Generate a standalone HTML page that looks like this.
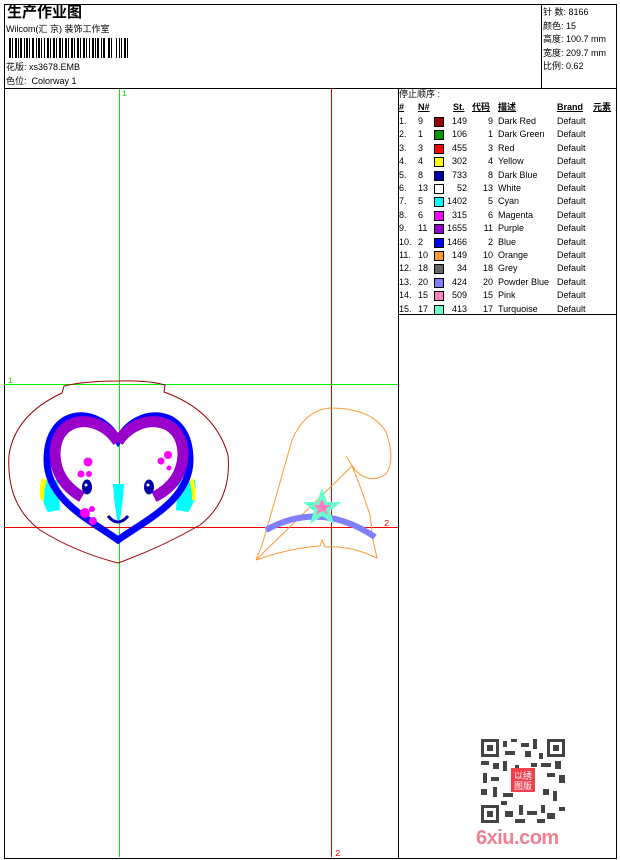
<!DOCTYPE html>
<html><head><meta charset="utf-8"><style>
*{margin:0;padding:0;box-sizing:border-box}
body{width:620px;height:860px;background:#fff;position:relative;overflow:hidden;font-family:"Liberation Sans","Noto Sans CJK SC",sans-serif;color:#000}
.a{position:absolute;white-space:nowrap}
.t{font-size:9px;line-height:11px}
</style></head><body>
<div class="a" style="left:4px;top:4px;width:613px;height:855px;border:1px solid #000"></div>
<div class="a" style="left:4px;top:88px;width:613px;height:1px;background:#000"></div>
<div class="a" style="left:541px;top:4px;width:1px;height:84px;background:#000"></div>
<div class="a" style="left:398px;top:88px;width:1px;height:771px;background:#000"></div>
<div class="a" style="left:398px;top:314px;width:219px;height:1px;background:#000"></div>

<div class="a" style="left:7px;top:4px;font-size:15px;font-weight:bold;line-height:18px">生产作业图</div>
<div class="a t" style="left:6px;top:24px">Wilcom(汇 京) 装饰工作室</div>
<svg class="a" style="left:9px;top:38px" width="120" height="20">
<g fill="#000">
<rect x="0" y="0" width="2" height="20"/><rect x="3" y="0" width="1" height="20"/><rect x="6" y="0" width="2" height="20"/><rect x="9" y="0" width="1" height="20"/><rect x="11" y="0" width="2" height="20"/><rect x="15" y="0" width="1" height="20"/><rect x="17" y="0" width="2" height="20"/><rect x="20" y="0" width="1" height="20"/><rect x="23" y="0" width="2" height="20"/><rect x="27" y="0" width="1" height="20"/><rect x="29" y="0" width="2" height="20"/><rect x="32" y="0" width="1" height="20"/><rect x="35" y="0" width="1" height="20"/><rect x="38" y="0" width="2" height="20"/><rect x="41" y="0" width="1" height="20"/><rect x="44" y="0" width="2" height="20"/><rect x="47" y="0" width="1" height="20"/><rect x="50" y="0" width="2" height="20"/><rect x="53" y="0" width="1" height="20"/><rect x="56" y="0" width="2" height="20"/><rect x="59" y="0" width="1" height="20"/><rect x="62" y="0" width="2" height="20"/><rect x="65" y="0" width="1" height="20"/><rect x="68" y="0" width="2" height="20"/><rect x="71" y="0" width="1" height="20"/><rect x="74" y="0" width="2" height="20"/><rect x="77" y="0" width="1" height="20"/><rect x="80" y="0" width="1" height="20"/><rect x="83" y="0" width="2" height="20"/><rect x="86" y="0" width="1" height="20"/><rect x="88" y="0" width="2" height="20"/><rect x="92" y="0" width="1" height="20"/><rect x="94" y="0" width="2" height="20"/><rect x="99" y="0" width="2" height="20"/><rect x="102" y="0" width="1" height="20"/><rect x="107" y="0" width="1" height="20"/><rect x="110" y="0" width="1" height="20"/><rect x="112" y="0" width="1" height="20"/><rect x="115" y="0" width="2" height="20"/><rect x="118" y="0" width="1" height="20"/>
</g></svg>
<div class="a t" style="left:6px;top:62px">花版: xs3678.EMB</div>
<div class="a t" style="left:6px;top:76px">色位:&nbsp; Colorway 1</div>

<div class="a t" style="left:543px;top:6px;line-height:13.5px">针 数: 8166<br>颜色: 15<br>高度: 100.7 mm<br>宽度: 209.7 mm<br>比例: 0.62</div>

<div class="a t" style="left:399px;top:89px">停止顺序 :</div>
<div class="a t" style="left:399px;top:102px;font-weight:bold;text-decoration:underline">#</div>
<div class="a t" style="left:418px;top:102px;font-weight:bold;text-decoration:underline">N#</div>
<div class="a t" style="left:453px;top:102px;font-weight:bold;text-decoration:underline">St.</div>
<div class="a t" style="left:472px;top:102px;font-weight:bold;text-decoration:underline">代码</div>
<div class="a t" style="left:498px;top:102px;font-weight:bold;text-decoration:underline">描述</div>
<div class="a t" style="left:557px;top:102px;font-weight:bold;text-decoration:underline">Brand</div>
<div class="a t" style="left:593px;top:102px;font-weight:bold;text-decoration:underline">元素</div>
<div id="rows"></div>
<script>
var d=[["1.","9","#990000","149","9","Dark Red"],["2.","1","#009900","106","1","Dark Green"],["3.","3","#ff0000","455","3","Red"],["4.","4","#ffff00","302","4","Yellow"],["5.","8","#0000aa","733","8","Dark Blue"],["6.","13","#ffffff","52","13","White"],["7.","5","#00ffff","1402","5","Cyan"],["8.","6","#ff00ff","315","6","Magenta"],["9.","11","#9900cc","1655","11","Purple"],["10.","2","#0000ff","1466","2","Blue"],["11.","10","#ff9933","149","10","Orange"],["12.","18","#666666","34","18","Grey"],["13.","20","#8080ff","424","20","Powder Blue"],["14.","15","#ff80c0","509","15","Pink"],["15.","17","#66ffcc","413","17","Turquoise"]];
var h="";for(var i=0;i<d.length;i++){var y=116+i*13.4;var r=d[i];
h+='<div class="a t" style="left:399px;top:'+y+'px">'+r[0]+'</div>';
h+='<div class="a t" style="left:418px;top:'+y+'px">'+r[1]+'</div>';
h+='<div class="a" style="left:434px;top:'+(y+1)+'px;width:10px;height:10px;border:1px solid #000;background:'+r[2]+'"></div>';
h+='<div class="a t" style="left:440px;width:27px;text-align:right;top:'+y+'px">'+r[3]+'</div>';
h+='<div class="a t" style="left:470px;width:23px;text-align:right;top:'+y+'px">'+r[4]+'</div>';
h+='<div class="a t" style="left:498px;top:'+y+'px">'+r[5]+'</div>';
h+='<div class="a t" style="left:557px;top:'+y+'px">Default</div>';}
document.getElementById("rows").innerHTML=h;
</script>

<svg class="a" style="left:0;top:0" width="620" height="860" shape-rendering="crispEdges">
<line x1="119.5" y1="89" x2="119.5" y2="857" stroke="#00ee00"/>
<line x1="331.5" y1="89" x2="331.5" y2="857" stroke="#ee0000"/>
<line x1="4" y1="384.5" x2="398" y2="384.5" stroke="#00ee00"/>
<line x1="4" y1="527.5" x2="398" y2="527.5" stroke="#ee0000"/>
</svg>
<svg class="a" style="left:0;top:0" width="620" height="860">
<text x="122" y="96" font-size="8" fill="#00cc00" font-family="Liberation Mono">1</text>
<text x="8" y="383" font-size="8" fill="#00cc00" font-family="Liberation Mono">1</text>
<text x="335" y="856" font-size="9" fill="#ee0000" font-family="Liberation Mono">2</text>
<text x="384" y="526" font-size="9" fill="#ee0000" font-family="Liberation Mono">2</text>
<path d="M118,381 Q148,380 165,385 L164,392 Q215,410 228,455 Q232,500 200,525 Q160,548 118,563 Q75,552 40,530 Q6,505 9,455 Q15,415 62,393 L64,386 Q85,381 118,381 Z" fill="none" stroke="#990000" stroke-width="1"/>
<path d="M42,480 Q40,500 48,512 L60,510 L58,480 Z" fill="#00ffff"/>
<path d="M42,478 Q38,490 41,500 L44,500 Q44,488 47,480 Z" fill="#ffff00"/>
<path d="M195,480 Q198,500 188,512 L176,510 L178,480 Z" fill="#00ffff"/>
<path d="M193,478 Q197,490 195,500 L192,500 Q192,488 189,480 Z" fill="#ffff00"/>
<path d="M118,440 C100,405 47,405 47,460 C47,500 90,520 118,540 C146,520 190,500 190,460 C190,405 136,405 118,440 Z" fill="none" stroke="#0000ff" stroke-width="7"/>
<path d="M118,442 C100,413 55,413 55,455 C56,478 70,490 82,497" fill="none" stroke="#9900cc" stroke-width="11"/>
<path d="M118,442 C136,413 183,413 183,455 C182,478 168,490 154,497" fill="none" stroke="#9900cc" stroke-width="11"/>
<ellipse cx="87" cy="487" rx="5" ry="7.5" fill="#0000aa"/><circle cx="86" cy="485" r="1.5" fill="#fff"/>
<ellipse cx="149" cy="487" rx="5" ry="7.5" fill="#0000aa"/><circle cx="148" cy="485" r="1.5" fill="#fff"/>
<path d="M113,484 L124,484 L123,498 L120,520 L117,520 L114,498 Z" fill="#00ffff"/>
<path d="M108,516 Q118,528 128,516" fill="none" stroke="#0000aa" stroke-width="3"/>
<g fill="#ff00ff"><circle cx="88" cy="462" r="4.5"/><circle cx="81" cy="474" r="3.5"/><circle cx="89" cy="474" r="3"/><circle cx="85" cy="513" r="5"/><circle cx="92" cy="509" r="3"/><circle cx="93" cy="521" r="4"/><circle cx="168" cy="455" r="4"/><circle cx="161" cy="461" r="3.5"/><circle cx="169" cy="468" r="2.5"/></g>
<path d="M256,560 L262,545 L275,500 L292,440 Q305,410 330,408 Q372,408 386,432 Q396,460 386,474 Q370,485 355,470 L346,456 M352,466 Q362,490 370,515 L373,540 L377,558 Q350,545 325,547 L322,540 L320,546 Q290,548 256,560 Z" fill="none" stroke="#ff9933" stroke-width="1"/>
<path d="M266,530 Q320,500 375,537" fill="none" stroke="#8080ff" stroke-width="6"/>
<polygon points="322,488 327,502 341,502 330,511 334,524 322,516 310,524 314,511 303,502 317,502" fill="#66ffcc"/>
<polygon points="322,499 325,505 331,505 326,509 328,515 322,511 316,515 318,509 313,505 319,505" fill="#ff80c0"/>
</svg>

<svg class="a" style="left:481px;top:739px" width="84" height="84">
<g fill="#444">
<rect x="0" y="0" width="18" height="18"/><rect x="66" y="0" width="18" height="18"/><rect x="0" y="66" width="18" height="18"/>
</g>
<g fill="#fff"><rect x="3" y="3" width="12" height="12"/><rect x="69" y="3" width="12" height="12"/><rect x="3" y="69" width="12" height="12"/></g>
<g fill="#444"><rect x="6" y="6" width="6" height="6"/><rect x="72" y="6" width="6" height="6"/><rect x="6" y="72" width="6" height="6"/>
<rect x="22" y="2" width="4" height="6"/><rect x="30" y="0" width="6" height="3"/><rect x="40" y="4" width="8" height="4"/><rect x="52" y="0" width="4" height="10"/><rect x="24" y="12" width="10" height="4"/><rect x="44" y="12" width="6" height="6"/><rect x="58" y="14" width="4" height="6"/>
<rect x="0" y="22" width="8" height="4"/><rect x="12" y="24" width="6" height="6"/><rect x="22" y="22" width="4" height="10"/><rect x="60" y="24" width="10" height="4"/><rect x="74" y="22" width="6" height="8"/><rect x="2" y="34" width="4" height="10"/><rect x="10" y="38" width="8" height="4"/><rect x="66" y="34" width="8" height="4"/><rect x="78" y="36" width="6" height="8"/>
<rect x="0" y="50" width="6" height="6"/><rect x="12" y="48" width="4" height="10"/><rect x="22" y="54" width="10" height="4"/><rect x="62" y="50" width="6" height="6"/><rect x="72" y="52" width="4" height="10"/><rect x="20" y="62" width="6" height="4"/><rect x="24" y="72" width="8" height="6"/><rect x="38" y="66" width="4" height="10"/><rect x="46" y="72" width="10" height="4"/><rect x="60" y="66" width="4" height="8"/><rect x="66" y="74" width="8" height="6"/><rect x="78" y="68" width="6" height="4"/><rect x="34" y="80" width="10" height="4"/><rect x="56" y="80" width="8" height="4"/><rect x="34" y="26" width="4" height="4"/><rect x="50" y="24" width="6" height="4"/></g>
<rect x="30" y="29" width="24" height="24" fill="#f04050"/>
<text x="33" y="40" font-size="9" fill="#fff" font-family="Noto Sans CJK SC">以绣</text>
<text x="33" y="50" font-size="9" fill="#fff" font-family="Noto Sans CJK SC">图版</text>
</svg>
<div class="a" style="left:476px;top:827px;font-size:20px;font-weight:bold;color:#f08090;letter-spacing:-0.5px">6xiu.com</div>
</body></html>
